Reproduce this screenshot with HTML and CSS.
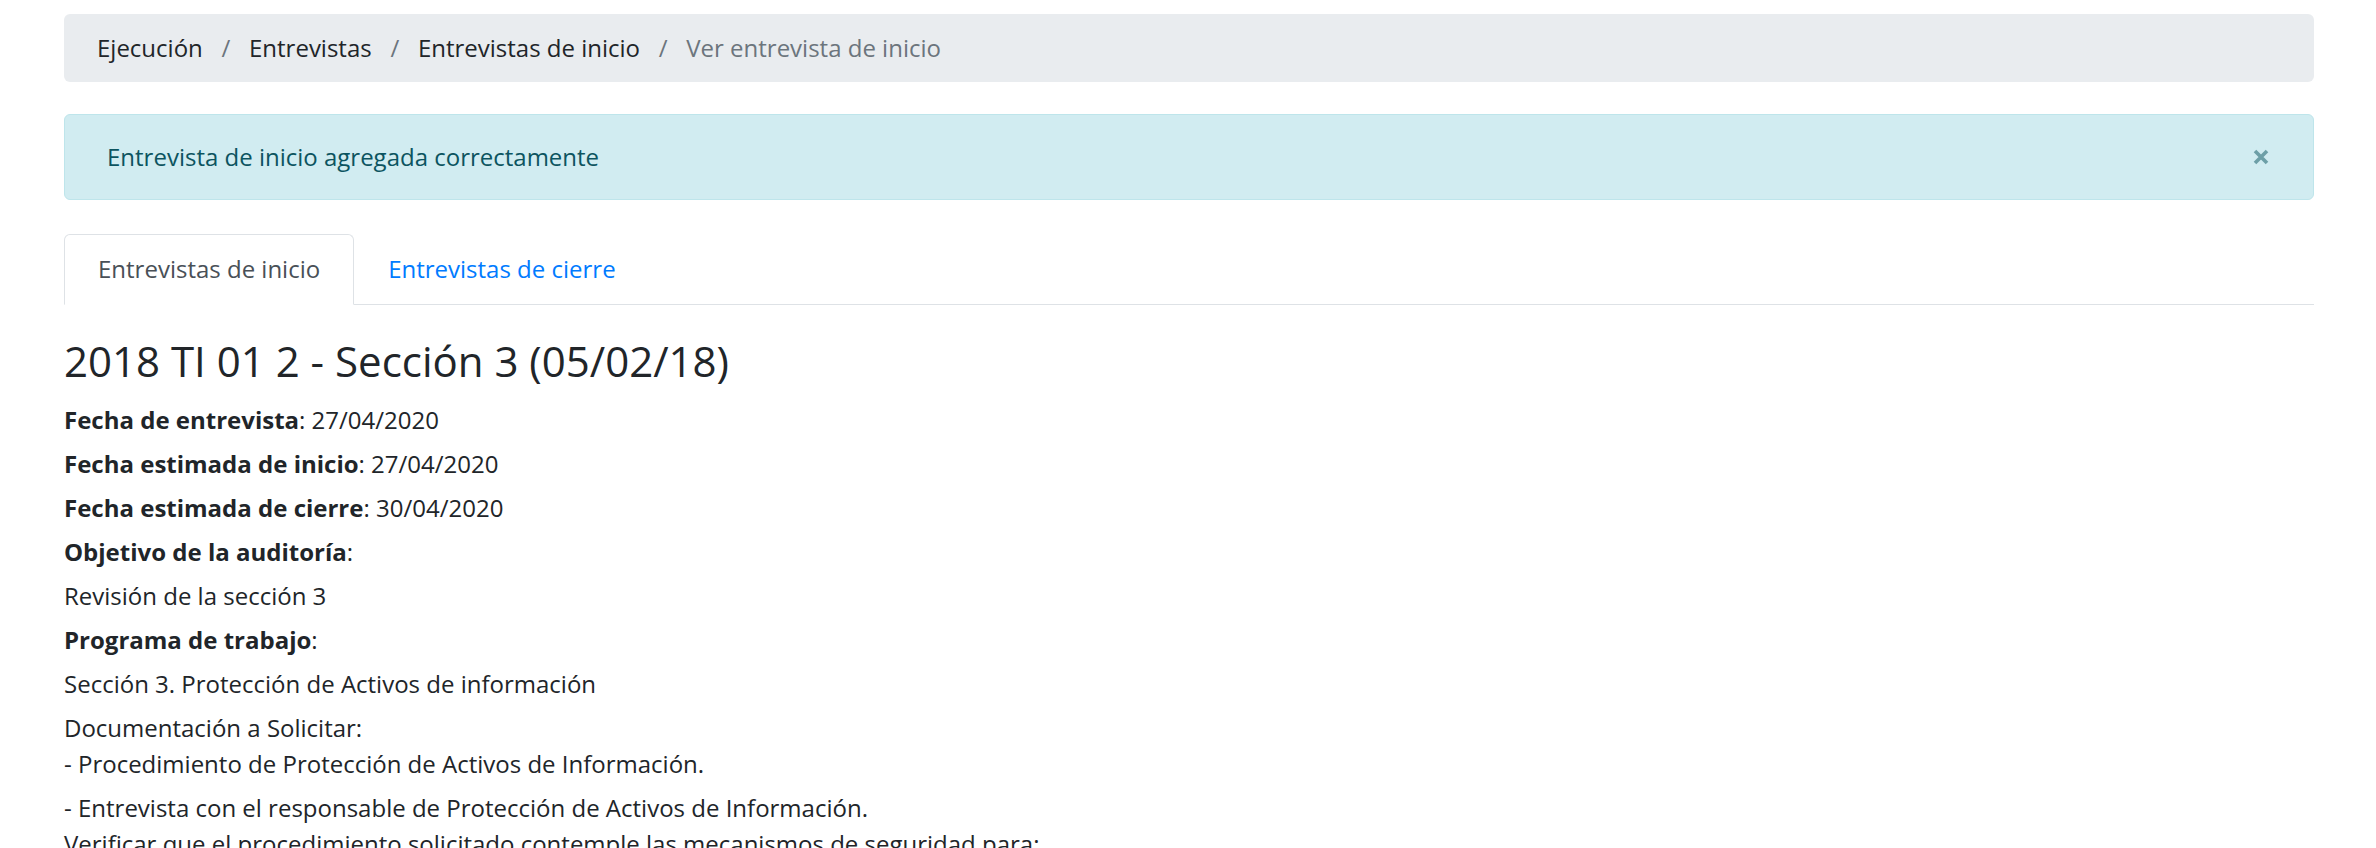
FILE: index.html
```html
<!DOCTYPE html>
<html lang="es">
<head>
<meta charset="utf-8">
<title>Ver entrevista de inicio</title>
<link rel="stylesheet" href="styles.css">
</head>
<body>
<div class="page">
  <nav class="breadcrumb">
    <span class="crumb">Ejecución</span>
    <span class="sep">/</span>
    <span class="crumb">Entrevistas</span>
    <span class="sep">/</span>
    <span class="crumb">Entrevistas de inicio</span>
    <span class="sep">/</span>
    <span class="crumb active">Ver entrevista de inicio</span>
  </nav>

  <div class="alert">
    <span class="alert-text">Entrevista de inicio agregada correctamente</span>
    <button class="close" type="button" aria-label="Cerrar">
      <svg width="16" height="16" viewBox="0 0 16 16"><path d="M2 2 L14 14 M14 2 L2 14" stroke="currentColor" stroke-width="3.6" stroke-linecap="butt"/></svg>
    </button>
  </div>

  <ul class="tabs">
    <li><a class="tab active">Entrevistas de inicio</a></li>
    <li><a class="tab">Entrevistas de cierre</a></li>
  </ul>

  <h3 class="title">2018 TI 01 2 - Sección 3 (05/02/18)</h3>
  <div class="details">
    <p><b>Fecha de entrevista</b>: 27/04/2020</p>
    <p><b>Fecha estimada de inicio</b>: 27/04/2020</p>
    <p><b>Fecha estimada de cierre</b>: 30/04/2020</p>
    <p><b>Objetivo de la auditoría</b>:</p>
    <p>Revisión de la sección 3</p>
    <p><b>Programa de trabajo</b>:</p>
    <p>Sección 3. Protección de Activos de información</p>
    <p>Documentación a Solicitar:<br>- Procedimiento de Protección de Activos de Información.</p>
    <p>- Entrevista con el responsable de Protección de Activos de Información.<br>Verificar que el procedimiento solicitado contemple las mecanismos de seguridad para:</p>
  </div>
</div>
</body>
</html>
```
FILE: styles.css
```css
* { box-sizing: border-box; }
html, body {
  margin: 0;
  padding: 0;
  background: #fff;
}
body {
  font-family: "Open Sans", "Liberation Sans", sans-serif;
  font-size: 24px;
  line-height: 36px;
  color: #212529;
}
.page {
  padding: 14px 62px 0 64px;
}
.breadcrumb {
  display: flex;
  align-items: center;
  background: #e9ecef;
  border-radius: 6px;
  padding: 16px 33px;
  margin-bottom: 32px;
}
.crumb { color: #212529; }
.crumb.active { color: #6c757d; }
.sep {
  color: #6c757d;
  padding: 0 18.7px;
}
.alert {
  display: flex;
  align-items: center;
  justify-content: space-between;
  background: #d1ecf1;
  border: 1px solid #bee5eb;
  border-radius: 6px;
  color: #0c5460;
  padding: 24px 44px 24px 42px;
  margin-bottom: 34px;
}
.close {
  background: none;
  border: 0;
  padding: 0;
  margin: 0;
  color: #0c5460;
  opacity: .5;
  display: flex;
  width: 16px;
  height: 16px;
}
.tabs {
  display: flex;
  list-style: none;
  margin: 0 0 31px 0;
  padding: 0;
  border-bottom: 1px solid #dee2e6;
}
.tabs li { margin-bottom: -1px; }
.tab {
  display: block;
  padding: 16px 33px 17px;
  border: 1px solid transparent;
  border-radius: 6px 6px 0 0;
  color: #007bff;
  cursor: pointer;
}
.tab.active {
  color: #495057;
  background: #fff;
  border-color: #dee2e6 #dee2e6 #fff;
}
.title {
  font-size: 42px;
  font-weight: 400;
  line-height: 1.2;
  margin: 0 0 16px 0;
}
.details p {
  margin: 0 0 8px 0;
}
.details b { font-weight: 700; }
```
